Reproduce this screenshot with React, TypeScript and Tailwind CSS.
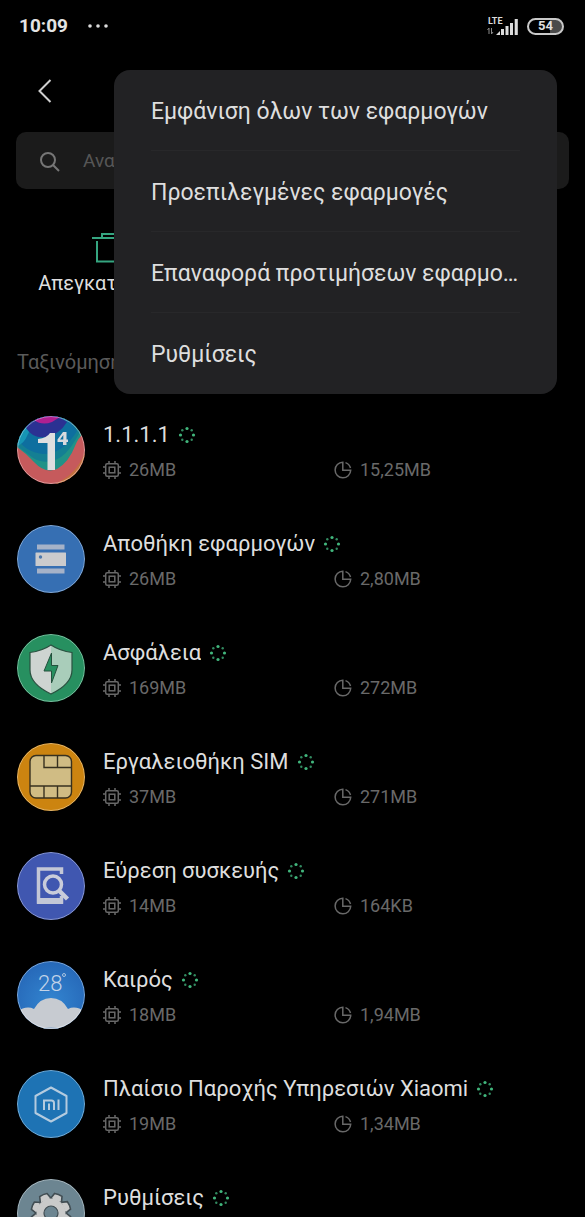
import { useState } from 'react';
import type { ReactNode } from 'react';

interface AppEntry {
  id: string;
  name: string;
  memory: string;
  storage: string;
  running: boolean;
  icon: ReactNode;
}

const MENU_ITEMS = [
  'Εμφάνιση όλων των εφαρμογών',
  'Προεπιλεγμένες εφαρμογές',
  'Επαναφορά προτιμήσεων εφαρμογών',
  'Ρυθμίσεις',
];

function OneIcon() {
  return (
    <svg viewBox="0 0 68 68" className="size-full">
      <rect width="68" height="68" fill="#c65a5c" />
      <path d="M68 44 Q60 60 42 68 H68 Z" fill="#c9983a" />
      <path d="M68 36 Q60 58 38 68 H46 Q62 60 68 48 Z" fill="#c47040" />
      <path d="M0 31 Q10 38 17 46 Q28 58 40 53 Q52 46 58 30 Q61 22 66 18 L60 0 H0 Z" fill="#219287" />
      <path d="M0 30 Q8 36 16 42 Q30 50 44 41 Q54 34 64 14 L56 0 H0 Z" fill="#147f93" />
      <path d="M0 22 Q8 36 26 38 Q46 38 60 15 L50 0 H0 Z" fill="#0e6f9f" />
      <path d="M0 30 Q7 28 11 18 L18 6 L0 0 Z" fill="#1695b4" />
      <path d="M9 12 Q16 23 29 21 Q42 19 50 6 L40 0 H12 Z" fill="#2b3192" />
      <path d="M17 4 Q25 10 35 6 L43 1 L30 0 Z" fill="#b01f91" />
      <path d="M21 23 Q30 22 33 17 H38 V54 H30.500 V27 H21 Z" fill="#dededf" />
      <path d="M46 16 H49.500 V23.500 H51 V26 H49.500 V29 H46 V26 H40.500 V23.500 Z M46.300 19 L43 23.500 H46.300 Z" fill="#d8dadd" fillRule="evenodd" />
    </svg>
  );
}

function StoreIcon() {
  return (
    <svg viewBox="0 0 68 68" className="size-full">
      <rect width="68" height="68" fill="#366fb3" />
      <rect x="20" y="19.500" width="27.500" height="5" fill="#a5b2c8" />
      <rect x="18.500" y="27.500" width="30.500" height="13.500" rx="0.500" fill="#cbcbcd" />
      <rect x="20" y="43.500" width="27.500" height="5" fill="#a5b2c8" />
      <circle cx="23.500" cy="32" r="1.700" fill="#4d78ac" />
    </svg>
  );
}

function SecurityIcon() {
  return (
    <svg viewBox="0 0 68 68" className="size-full">
      <rect width="68" height="68" fill="#279060" />
      <path d="M34 11 Q43 17 55 18.500 V36 Q55 50 34 60 Q13 50 13 36 V18.500 Q25 17 34 11 Z" fill="#a9cdba" />
      <path d="M34 11 Q25 17 13 18.500 V36 Q13 50 34 60 Z" fill="#ced4d1" />
      <path d="M34 11 Q43 17 55 18.500 V36 Q55 50 34 60 Q13 50 13 36 V18.500 Q25 17 34 11 Z" fill="none" stroke="#2a5140" strokeWidth="1.200" />
      <path d="M34.500 19 V31.500 H41 L34.500 49 V37 H27 Z" fill="#279060" stroke="#24513d" strokeWidth="1" />
    </svg>
  );
}

function SimIcon() {
  return (
    <svg viewBox="0 0 68 68" className="size-full">
      <rect width="68" height="68" fill="#cc8410" />
      <rect x="13" y="12.500" width="41.500" height="42.500" rx="6" fill="#d0bc84" stroke="#37301f" strokeWidth="1.400" />
      <path d="M27 12.500 V24.500 H54.500 M40.500 12.500 V24.500 M13 43 H54.500 M27 43 V55 M40.500 43 V55" fill="none" stroke="#37301f" strokeWidth="1.400" />
    </svg>
  );
}

function FindDeviceIcon() {
  return (
    <svg viewBox="0 0 68 68" className="size-full">
      <rect width="68" height="68" fill="#4057b0" />
      <path d="M44.500 22 V17 H21.500 V50 H44.500 V44" fill="none" stroke="#c3c7d6" strokeWidth="3.500" />
      <path d="M20 46 H46 V52 H20 Z" fill="#c3c7d6" />
      <circle cx="36" cy="32.500" r="11.500" fill="#4057b0" />
      <circle cx="36" cy="32.500" r="8.500" fill="none" stroke="#c9ccda" strokeWidth="3.500" />
      <path d="M42 38.500 L50.500 47" stroke="#c9ccda" strokeWidth="4.500" />
    </svg>
  );
}

function WeatherIcon() {
  return (
    <svg viewBox="0 0 68 68" className="size-full">
      <defs>
        <radialGradient id="sky" cx="0.5" cy="0.6" r="0.6">
          <stop offset="0" stopColor="#3385d0" />
          <stop offset="1" stopColor="#2668b8" />
        </radialGradient>
      </defs>
      <rect width="68" height="68" fill="url(#sky)" />
      <text x="21" y="30" fontSize="22" fontWeight="300" fontFamily="Roboto, sans-serif" fill="#c3d4e8">28</text>
      <circle cx="47" cy="14" r="1.500" fill="none" stroke="#b9cde4" strokeWidth="0.900" />
      <path d="M0 51 Q9 44 17 48 Q23 37 34 37 Q45 37 51 48 Q59 44 68 51 V68 H0 Z" fill="#c7cbd1" />
      <path d="M24 68 Q34 64 44 68 Z" fill="#9fb3cb" />
    </svg>
  );
}

function XiaomiIcon() {
  return (
    <svg viewBox="0 0 68 68" className="size-full">
      <rect width="68" height="68" fill="#1e73b4" />
      <path d="M34 17.500 L49.500 26 V43 L34 51.500 L18.500 43 V26 Z" fill="none" stroke="#b4cbdf" strokeWidth="2" strokeLinejoin="round" />
      <path d="M27 40 V30.500 H34.500 Q37 30.500 37 33 V40 M32 33.500 V40 M41.500 29.500 V40" fill="none" stroke="#b4cbdf" strokeWidth="2" />
    </svg>
  );
}

function SettingsIcon() {
  const teeth = [0, 45, 90, 135, 180, 225, 270, 315];
  return (
    <svg viewBox="0 0 68 68" className="size-full">
      <rect width="68" height="68" fill="#6c8591" />
      <g fill="#c9caca" stroke="#414d53" strokeWidth="1.600">
        <circle cx="34" cy="34" r="15" />
        {teeth.map((angle) => (
          <path key={angle} d="M28 21 L30 14.500 Q34 13.500 38 14.500 L40 21 Z" transform={`rotate(${angle + 22} 34 34)`} />
        ))}
      </g>
      <circle cx="34" cy="34" r="14.500" fill="#c9caca" />
      <circle cx="34" cy="34" r="7" fill="#6c8591" stroke="#414d53" strokeWidth="1.200" />
    </svg>
  );
}

const APPS: AppEntry[] = [
  { id: 'one', name: '1.1.1.1', memory: '26MB', storage: '15,25MB', running: true, icon: <OneIcon /> },
  { id: 'store', name: 'Αποθήκη εφαρμογών', memory: '26MB', storage: '2,80MB', running: true, icon: <StoreIcon /> },
  { id: 'security', name: 'Ασφάλεια', memory: '169MB', storage: '272MB', running: true, icon: <SecurityIcon /> },
  { id: 'sim', name: 'Εργαλειοθήκη SIM', memory: '37MB', storage: '271MB', running: true, icon: <SimIcon /> },
  { id: 'find', name: 'Εύρεση συσκευής', memory: '14MB', storage: '164KB', running: true, icon: <FindDeviceIcon /> },
  { id: 'weather', name: 'Καιρός', memory: '18MB', storage: '1,94MB', running: true, icon: <WeatherIcon /> },
  { id: 'xiaomi', name: 'Πλαίσιο Παροχής Υπηρεσιών Xiaomi', memory: '19MB', storage: '1,34MB', running: true, icon: <XiaomiIcon /> },
  { id: 'settings', name: 'Ρυθμίσεις', memory: '', storage: '', running: true, icon: <SettingsIcon /> },
];

function RunningDots() {
  return (
    <svg viewBox="0 0 18 18" className="size-[18px] shrink-0" fill="#41b67c">
      <circle cx="9" cy="2.500" r="1.600" />
      <circle cx="9" cy="15.500" r="1.600" />
      <circle cx="2.500" cy="9" r="1.600" />
      <circle cx="15.500" cy="9" r="1.600" />
      <g fill="#328a60">
        <circle cx="4.300" cy="4.300" r="1.200" />
        <circle cx="13.700" cy="4.300" r="1.200" />
        <circle cx="4.300" cy="13.700" r="1.200" />
        <circle cx="13.700" cy="13.700" r="1.200" />
      </g>
    </svg>
  );
}

function ChipIcon() {
  return (
    <svg viewBox="0 0 18 18" className="size-[18px] shrink-0" fill="none" stroke="currentColor" strokeWidth="1.500">
      <rect x="2.700" y="2.700" width="12.600" height="12.600" rx="1.500" />
      <rect x="6.200" y="6.200" width="5.600" height="5.600" />
      <path d="M6 0 V2.700 M12 0 V2.700 M6 15.300 V18 M12 15.300 V18 M0 6 H2.700 M0 12 H2.700 M15.300 6 H18 M15.300 12 H18" />
    </svg>
  );
}

function StorageIcon() {
  return (
    <svg viewBox="0 0 18 18" className="size-[18px] shrink-0" fill="none" stroke="currentColor" strokeWidth="1.500">
      <path d="M8.800 1.200 A7.800 7.800 0 1 0 16.700 9.300 H8.800 Z" />
      <path d="M11.500 1.600 A7.800 7.800 0 0 1 16.500 7" />
    </svg>
  );
}

function StatusBar() {
  return (
    <div className="flex h-[50px] shrink-0 items-center justify-between pl-[19px] pr-[21px] pt-0.5">
      <div className="flex items-center gap-5">
        <span className="text-[19px] font-bold text-[#e4e4e4]">10:09</span>
        <svg viewBox="0 0 20 4" className="h-1 w-5" fill="#dcdcdc">
          <circle cx="2" cy="2" r="1.800" />
          <circle cx="10" cy="2" r="1.800" />
          <circle cx="18" cy="2" r="1.800" />
        </svg>
      </div>
      <div className="flex items-center gap-2">
        <svg viewBox="0 0 32 19" className="h-[19px] w-8" fill="#dcdcdc">
          <text x="1" y="7" fontSize="9" fontWeight="700" fontFamily="Roboto, sans-serif">LTE</text>
          <path d="M9 18 L13 14 V18 Z M14 12 H17 V18 H14 Z M18.500 9 H21.500 V18 H18.500 Z M23 6 H26 V18 H23 Z M27.700 2 H30.800 V18 H27.700 Z" />
          <path d="M2 17 V11 L0.500 13 M4.500 11 V17 L6 15" fill="none" stroke="#8a8a8a" strokeWidth="1" />
        </svg>
        <div className="flex h-[17px] w-[37px] items-center justify-center rounded-full border-2 border-[#c9c9c9] bg-linear-to-r from-black from-65% to-[#4a4a4a] to-65% text-[13px] font-bold text-[#e0e0e0]">
          54
        </div>
      </div>
    </div>
  );
}

function AppRow({ app }: { app: AppEntry }) {
  return (
    <li className="flex h-[109px] shrink-0 items-center gap-[18px]">
      <div className="relative size-[68px] shrink-0 overflow-hidden rounded-full">
        {app.icon}
        <div className="absolute inset-0 rounded-full border border-white/40" />
      </div>
      <div className="min-w-0 flex-1 pt-1.5">
        <div className="flex items-center gap-2">
          <span className="truncate text-[22px] leading-7 text-[#dedede]">{app.name}</span>
          {app.running && <RunningDots />}
        </div>
        <div className="mt-[7px] grid h-7 grid-cols-2 text-lg leading-7 text-[#696969]">
          {app.memory && <span className="flex items-center gap-2"><ChipIcon />{app.memory}</span>}
          {app.storage && <span className="flex items-center gap-2"><StorageIcon />{app.storage}</span>}
        </div>
      </div>
    </li>
  );
}

export default function App() {
  const [menuOpen, setMenuOpen] = useState(true);
  const [query, setQuery] = useState('');

  return (
    <div className="relative flex h-screen flex-col overflow-hidden bg-black font-['Roboto','Noto_Sans',sans-serif]">
      <StatusBar />

      <header className="flex h-[82px] shrink-0 items-center px-[37px]">
        <button aria-label="Πίσω" onClick={() => setMenuOpen(false)}>
          <svg viewBox="0 0 15 24" className="h-6 w-[15px]" fill="none" stroke="#cfcfcf" strokeWidth="2">
            <path d="M13.500 1 L2.500 12 L13.500 23" />
          </svg>
        </button>
      </header>

      <label className="mx-4 flex h-[57px] shrink-0 items-center gap-[23px] rounded-[10px] bg-[#1b1b1b] pl-6 pt-0.5">
        <svg viewBox="0 0 20 20" className="size-5 shrink-0" fill="none" stroke="#767676" strokeWidth="2">
          <circle cx="8" cy="8" r="7" />
          <path d="M13 13 L19 19" />
        </svg>
        <input
          value={query}
          onChange={(e) => setQuery(e.target.value)}
          placeholder="Αναζήτηση"
          aria-label="Αναζήτηση"
          className="min-w-0 flex-1 bg-transparent text-[19px] outline-none placeholder:text-[#565656]"
        />
      </label>

      <div className="grid shrink-0 grid-cols-3 px-5 pt-11">
        <button className="flex flex-col items-center gap-2 whitespace-nowrap text-xl leading-6 text-[#dedede]">
          <svg viewBox="0 0 38 30" className="h-[30px] w-[38px]" fill="none" stroke="#35a580" strokeWidth="2">
            <path d="M0 5 H38 M10 5 V1 H28 V5 M5 8 V28.500 H33 V8" />
          </svg>
          Απεγκατάσταση
        </button>
      </div>

      <button className="mx-[17px] mt-[51px] shrink-0 text-left text-xl leading-8 text-[#5a5a5a]">
        Ταξινόμηση κατά κατάσταση
      </button>

      <ul className="mt-[17px] flex min-h-0 flex-1 flex-col overflow-hidden pl-[17px] pr-5">
        {APPS.map((app) => <AppRow key={app.id} app={app} />)}
      </ul>

      {menuOpen && (
        <div role="menu" className="absolute right-7 top-[70px] w-[443px] rounded-2xl bg-[#222224] px-[37px]">
          {MENU_ITEMS.map((item) => (
            <button
              key={item}
              role="menuitem"
              onClick={() => setMenuOpen(false)}
              className="block h-[81px] w-full truncate border-b border-[#28282a] pt-1 text-left text-[23px] text-[#dedede] last:border-b-0"
            >
              {item}
            </button>
          ))}
        </div>
      )}
    </div>
  );
}
